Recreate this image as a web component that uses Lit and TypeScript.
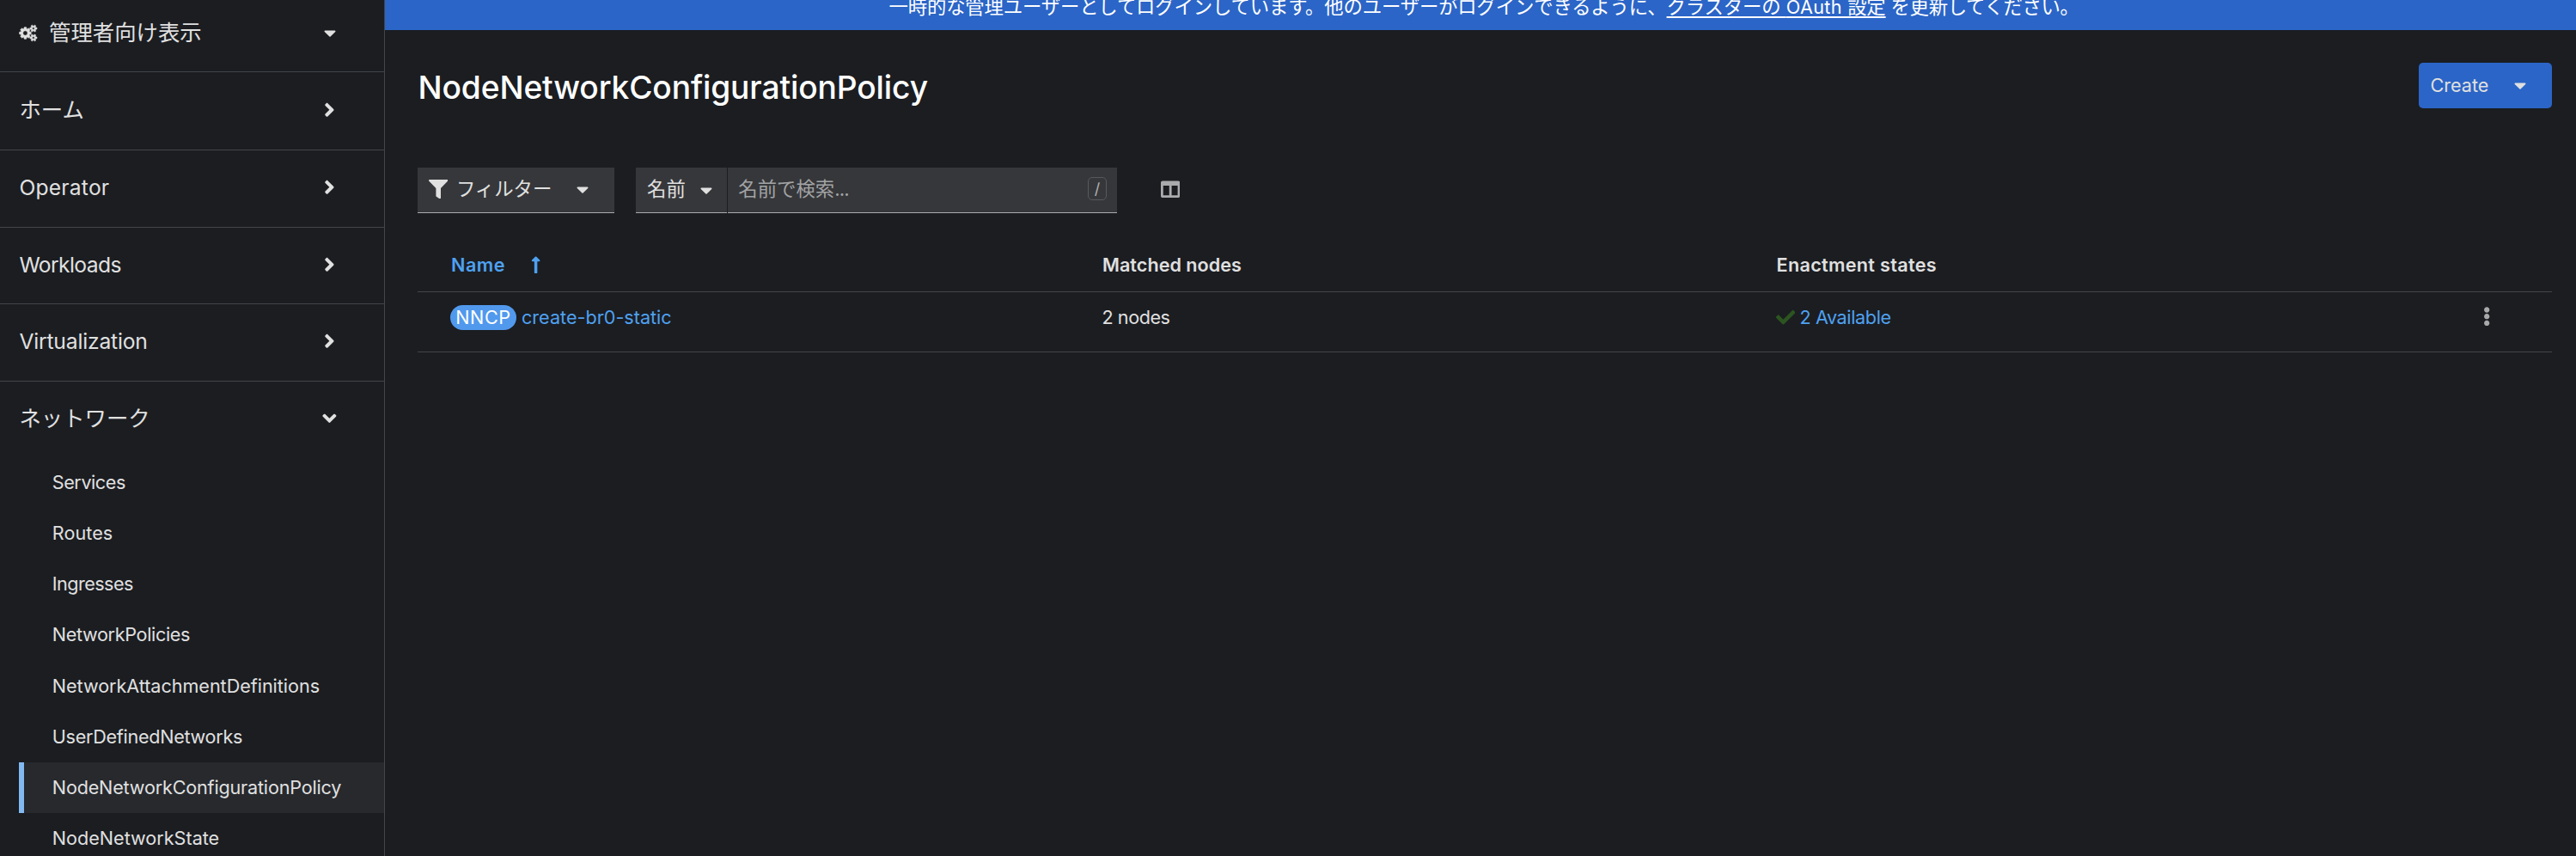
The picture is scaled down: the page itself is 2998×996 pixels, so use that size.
import { LitElement, html, css, svg } from "lit";
import { styleMap } from "lit/directives/style-map.js";
import { classMap } from "lit/directives/class-map.js";

const ICONS = {
  cogs: {
    box: "0 0 1920 1792",
    d: "M896 896q0-106-75-181t-181-75-181 75-75 181 75 181 181 75 181-75 75-181zm768 512q0-52-38-90t-90-38-90 38-38 90q0 53 37.5 90.5t90.5 37.5 90.5-37.5 37.5-90.5zm0-1024q0-52-38-90t-90-38-90 38-38 90q0 53 37.5 90.5t90.5 37.5 90.5-37.5 37.5-90.5zm-384 421v185q0 10-7 19.5t-16 10.5l-155 24q-11 35-32 76 34 48 90 115 7 11 7 20 0 12-7 19-23 30-82.5 89.5t-78.5 59.5q-11 0-21-7l-115-90q-37 19-77 31-11 108-23 155-7 24-30 24h-186q-11 0-20-7.5t-10-17.5l-23-153q-34-10-75-31l-118 89q-7 7-20 7-11 0-21-8-144-133-144-160 0-9 7-19 10-14 41-53t47-61q-23-44-35-82l-152-24q-10-1-17-9.5t-7-19.5v-185q0-10 7-19.5t16-10.5l155-24q11-35 32-76-34-48-90-115-7-11-7-20 0-12 7-20 22-30 82-89t79-59q11 0 21 7l115 90q34-18 77-32 11-108 23-154 7-24 30-24h186q11 0 20 7.5t10 17.5l23 153q34 10 75 31l118-89q8-7 20-7 11 0 21 8 144 133 144 160 0 8-7 19-12 16-42 54t-45 60q23 48 34 82l152 23q10 2 17 10.5t7 19.5zm640 533v140q0 16-149 31-12 27-30 52 51 113 51 138 0 4-4 7-122 71-124 71-8 0-46-47t-52-68q-20 2-30 2t-30-2q-14 21-52 68t-46 47q-2 0-124-71-4-3-4-7 0-25 51-138-18-25-30-52-149-15-149-31v-140q0-16 149-31 13-29 30-52-51-113-51-138 0-4 4-7 4-2 35-20t59-34 30-16q8 0 46 46.5t52 67.5q20-2 30-2t30 2q51-71 92-112l6-2q4 0 124 70 4 3 4 7 0 25-51 138 17 23 30 52 149 15 149 31zm0-1024v140q0 16-149 31-12 27-30 52 51 113 51 138 0 4-4 7-122 71-124 71-8 0-46-47t-52-68q-20 2-30 2t-30-2q-14 21-52 68t-46 47q-2 0-124-71-4-3-4-7 0-25 51-138-18-25-30-52-149-15-149-31v-140q0-16 149-31 13-29 30-52-51-113-51-138 0-4 4-7 4-2 35-20t59-34 30-16q8 0 46 46.5t52 67.5q20-2 30-2t30 2q51-71 92-112l6-2q4 0 124 70 4 3 4 7 0 25-51 138 17 23 30 52 149 15 149 31z",
  },
  caret: {
    box: "0 0 320 512",
    d: "M31.3 192h257.3c17.8 0 26.7 21.5 14.1 34.1L174.1 354.7c-7.8 7.8-20.5 7.8-28.3 0L17.2 226.1C4.6 213.5 13.4 192 31.3 192z",
  },
  angle: {
    box: "0 0 256 512",
    d: "M224.3 273l-136 136c-9.4 9.4-24.6 9.4-33.9 0l-22.6-22.6c-9.4-9.4-9.4-24.6 0-33.9l96.4-96.4-96.4-96.4c-9.4-9.4-9.4-24.6 0-33.9L54.3 103c9.4-9.4 24.6-9.4 33.9 0l136 136c9.5 9.4 9.5 24.6.1 34z",
  },
  filter: {
    box: "0 0 512 512",
    d: "M487.976 0H24.028C2.71 0-8.047 25.866 7.058 40.971L192 225.941V432c0 7.831 3.821 15.17 10.237 19.662l80 55.98C298.02 518.69 320 507.493 320 487.98V225.941l184.947-184.97C520.021 25.896 509.338 0 487.976 0z",
  },
  columns: {
    box: "0 0 512 512",
    d: "M464 32H48C21.49 32 0 53.49 0 80v352c0 26.51 21.49 48 48 48h416c26.51 0 48-21.49 48-48V80c0-26.51-21.49-48-48-48zM224 416H64V160h160v256zm224 0H288V160h160v256z",
  },
  arrow: {
    box: "0 0 256 512",
    d: "M88 166.059V468c0 6.627 5.373 12 12 12h56c6.627 0 12-5.373 12-12V166.059h46.059c21.382 0 32.09-25.851 16.971-40.971l-86.059-86.059c-9.373-9.373-24.569-9.373-33.941 0l-86.059 86.059c-15.119 15.119-4.411 40.971 16.971 40.971H88z",
  },
  check: {
    box: "0 0 512 512",
    d: "M173.898 439.404l-166.4-166.4c-9.997-9.997-9.997-26.206 0-36.204l36.203-36.204c9.997-9.998 26.207-9.998 36.204 0L192 312.69 432.095 72.596c9.997-9.997 26.207-9.997 36.204 0l36.203 36.204c9.997 9.997 9.997 26.206 0 36.204l-294.4 294.401c-9.998 9.997-26.207 9.997-36.204-.001z",
  },
  kebab: {
    box: "0 0 192 512",
    d: "M96 184c39.8 0 72 32.2 72 72s-32.2 72-72 72-72-32.2-72-72 32.2-72 72-72zM24 80c0 39.8 32.2 72 72 72s72-32.2 72-72S135.8 8 96 8 24 40.2 24 80zm0 352c0 39.8 32.2 72 72 72s72-32.2 72-72-32.2-72-72-72-72 32.2-72 72z",
  },
};

const icon = (name: keyof typeof ICONS, cls = "") =>
  html`<svg class="icon ${name} ${cls}" viewBox=${ICONS[name].box} aria-hidden="true">
    ${svg`<path d=${ICONS[name].d}></path>`}
  </svg>`;

interface NavEntry {
  label: string;
  track: number;
  height: number;
  jp?: boolean;
}

const SECTIONS: NavEntry[] = [
  { label: "ホーム", track: 0, height: 91, jp: true },
  { label: "Operator", track: 0.21, height: 90 },
  { label: "Workloads", track: -0.6, height: 89 },
  { label: "Virtualization", track: -0.18, height: 90 },
];

const NETWORK_ITEMS: { label: string; track: number; current?: boolean }[] = [
  { label: "Services", track: -0.44 },
  { label: "Routes", track: 0.06 },
  { label: "Ingresses", track: -0.55 },
  { label: "NetworkPolicies", track: -0.34 },
  { label: "NetworkAttachmentDefinitions", track: -0.04 },
  { label: "UserDefinedNetworks", track: -0.28 },
  { label: "NodeNetworkConfigurationPolicy", track: -0.18, current: true },
  { label: "NodeNetworkState", track: 0 },
];

const base = css`
  * { box-sizing: border-box; }
  .icon { display: block; flex: none; fill: currentColor; height: 22.4px; }
  .caret { width: 14px; }
  .jp { font-size: 22.4px; }
  .txt { white-space: pre; }
`;

class ConsoleNav extends LitElement {
  static styles = [base, css`
    :host {
      display: block; width: 448px; height: 996px; flex: none; overflow: hidden;
      border-right: 1px solid #444548;
    }
    .row {
      display: flex; align-items: center; justify-content: space-between;
      border-bottom: 1px solid #444548; padding: 0 57.5px 3px 22.4px;
      font-size: 24.65px; line-height: 38px;
    }
    .row .jp { font-size: 25.4px; }
    .toggle { height: 84px; padding: 0 56px 7px 22.4px; }
    .toggle .who { display: flex; align-items: center; gap: 13px; }
    .cogs {
      width: 21.6px; height: 19px; overflow: visible;
      stroke: currentColor; stroke-width: 70;
    }
    .angle { width: 12.8px; height: 25.6px; }
    .network { height: 88.4px; border: 0; padding-bottom: 3px; }
    .down { transform: rotate(90deg); }
    .sub {
      display: flex; align-items: center; height: 59.1px; margin-left: 22px;
      padding: 0 0 1.6px 38.8px; font-size: 21.6px; line-height: 34px;
    }
    .current { background: #27292d; padding-left: 32.8px; border-left: 6px solid #83b9f1; }
  `];
  render() {
    return html`
      <div class="row toggle">
        <div class="who">${icon("cogs")}<span class="jp">管理者向け表示</span></div>
        ${icon("caret")}
      </div>
      ${SECTIONS.map((s) => html`
        <div class="row" style=${styleMap({ height: `${s.height}px` })}>
          <span class=${classMap({ txt: true, jp: !!s.jp })}
            style=${styleMap({ letterSpacing: `${s.track}px` })}>${s.label}</span>
          ${icon("angle")}
        </div>`)}
      <div class="row network"><span class="jp">ネットワーク</span>${icon("angle", "down")}</div>
      ${NETWORK_ITEMS.map((n) => html`
        <div class=${classMap({ sub: true, current: !!n.current })}>
          <span class="txt" style=${styleMap({ letterSpacing: `${n.track}px` })}>${n.label}</span>
        </div>`)}
    `;
  }
}
customElements.define("console-nav", ConsoleNav);

class PolicyTable extends LitElement {
  static styles = [base, css`
    :host { display: block; font-size: 21.6px; line-height: 34px; }
    .tr {
      display: grid; grid-template-columns: 758.5px 784px 1fr 107px;
      border-bottom: 1px solid #444548; padding-left: 38px;
    }
    .head { height: 63px; padding-top: 14px; font-weight: 600; }
    .body { height: 70px; padding-top: 12px; }
    .cell { display: flex; align-items: center; height: 34px; }
    .link { color: #4fa1f0; }
    .name { letter-spacing: .5px; padding-left: 1px; }
    .arrow { width: 11.2px; margin-left: 30px; }
    .badge {
      background: #5199ed; color: #fff; border-radius: 15px; width: 77px; height: 29px;
      display: flex; align-items: center; justify-content: center; letter-spacing: .6px;
      margin-right: 6px;
    }
    .n2 { letter-spacing: -.45px; }
    .av { letter-spacing: -.37px; }
    .mn { letter-spacing: .02px; padding-left: .5px; }
    .es { letter-spacing: .32px; padding-left: 1px; }
    .check { width: 22.4px; color: #2c5420; margin-right: 5.5px; }
    .kebab { width: 8.4px; color: #a9a9ab; margin-left: 27px; margin-top: -1px; }
  `];
  render() {
    return html`
      <div class="tr head">
        <div class="cell link name">Name${icon("arrow")}</div>
        <div class="cell mn">Matched nodes</div>
        <div class="cell es">Enactment states</div>
        <div class="cell"></div>
      </div>
      <div class="tr body">
        <div class="cell"><span class="badge">NNCP</span><span class="link">create-br0-static</span></div>
        <div class="cell n2">2 nodes</div>
        <div class="cell av">${icon("check")}<span class="link">2 Available</span></div>
        <div class="cell">${icon("kebab")}</div>
      </div>
    `;
  }
}
customElements.define("policy-table", PolicyTable);

class AppRoot extends LitElement {
  static styles = [base, css`
    :host {
      display: flex; width: 2998px; height: 996px; overflow: hidden;
      background: #1b1d21; color: #e0e0e0;
      font-family: Inter, "Noto Sans CJK JP", sans-serif; font-size: 21.6px; line-height: 34px;
    }
    .main { flex: 1; min-width: 0; }
    .banner {
      height: 35px; background: #2b65c7; color: #fff; font-size: 22.4px; line-height: 34px;
      padding-left: 586.5px; white-space: pre; overflow: hidden;
    }
    .banner-text { margin-top: -9.5px; }
    .lead { letter-spacing: -.18px; }
    .tail { letter-spacing: -.35px; }
    .banner a {
      text-decoration: underline; text-decoration-thickness: 2px; text-underline-offset: 3px;
      letter-spacing: -.15px;
    }
    .oauth { font-size: 21.6px; letter-spacing: .4px; }
    .content { padding: 38px 28px 0 38px; }
    .header { display: flex; justify-content: space-between; height: 53px; }
    h1 {
      margin: 4px 0 0 .5px; font-size: 37.2px; font-weight: 500; line-height: 50px;
      letter-spacing: -.13px; color: #fff;
    }
    .create {
      display: flex; align-items: center; width: 155px; height: 53px; border-radius: 5px;
      background: #2b65c7; padding: 0 0 1px 13.5px; gap: 30px;
    }
    .toolbar { display: flex; margin-top: 69px; height: 53px; }
    .field {
      display: flex; align-items: center; background: #36373a;
      border-bottom: 1px solid #aaabac; padding-bottom: 2px;
    }
    .filter-toggle { width: 229px; padding-left: 13px; }
    .filter { width: 22.4px; margin-right: 9.5px; }
    .filter-toggle .caret { margin-left: 29px; }
    .attr { margin-left: 25px; width: 105.5px; padding-left: 13px; margin-right: 1px; }
    .attr .caret { margin: 2px 0 0 17.5px; }
    .search {
      width: 453.5px; padding: 0 12px 2px 12.8px; justify-content: space-between; color: #a2a3a5;
    }
    .dots { letter-spacing: -.9px; }
    .key {
      width: 22px; height: 27px; border: 1px solid #58595c; border-radius: 5px;
      display: flex; align-items: center; justify-content: center; font-size: 18px; margin-top: -1px;
      color: #b0b0b2;
    }
    .columns { width: 22.4px; color: #aaabad; margin: 14px 0 0 51px; }
    policy-table { margin-top: 29px; }
  `];
  render() {
    return html`
      <console-nav></console-nav>
      <div class="main">
        <div class="banner"><div class="banner-text"><span class="lead">一時的な管理ユーザーとしてログインしています。他のユーザーがログインできるように、</span><a>クラスターの <span class="oauth">OAuth</span> 設定</a><span class="tail"> を更新してください。</span></div></div>
        <div class="content">
          <div class="header">
            <h1>NodeNetworkConfigurationPolicy</h1>
            <div class="create"><span>Create</span>${icon("caret")}</div>
          </div>
          <div class="toolbar">
            <div class="field filter-toggle">${icon("filter")}<span class="jp">フィルター</span>${icon("caret")}</div>
            <div class="field attr"><span class="jp">名前</span>${icon("caret")}</div>
            <div class="field search"><span class="jp">名前で検索<span class="dots">...</span></span><span class="key">/</span></div>
            ${icon("columns")}
          </div>
          <policy-table></policy-table>
        </div>
      </div>
    `;
  }
}
customElements.define("app-root", AppRoot);
